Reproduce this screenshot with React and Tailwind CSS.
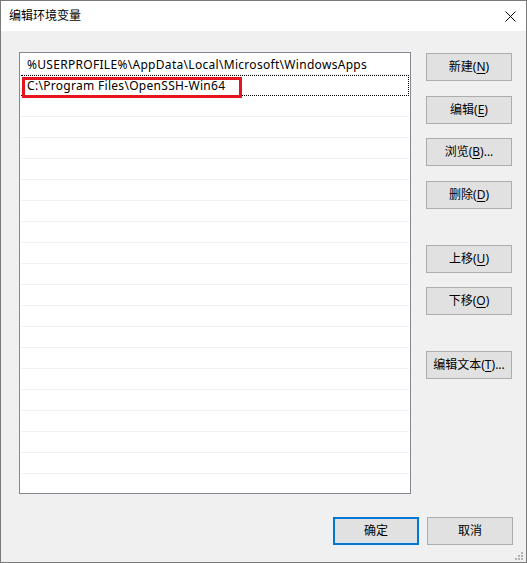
import React from 'react';

const rows = [
    '%USERPROFILE%\\AppData\\Local\\Microsoft\\WindowsApps',
    'C:\\Program Files\\OpenSSH-Win64',
];

const font = { fontFamily: '"Noto Sans", "Noto Sans CJK SC", sans-serif' };

const WinButton = ({ label, hotkey, suffix = '', className = '', primary = false }) => (
    <button
        className={`w-[86px] h-[28px] bg-[#e1e1e1] text-black text-[12px] leading-none flex items-center justify-center ${primary ? 'border-2 border-[#0078d7]' : 'border border-[#adadad]'} ${className}`}
    >
        <span>{label}</span>
        {hotkey && (
            <span>
                (<span className="underline underline-offset-2">{hotkey}</span>)
            </span>
        )}
        {suffix && <span>{suffix}</span>}
    </button>
);

export default function App() {
    const total = 21;

    return (
        <div
            className="w-[527px] h-[563px] flex flex-col border border-[#7a7a7a] bg-[#f0f0f0] overflow-hidden"
            style={font}
        >
            {/* Title bar */}
            <div className="h-[30px] bg-white flex items-center justify-between pl-[8px] pr-[10px] shrink-0">
                <span className="text-[12px] text-black">编辑环境变量</span>
                <svg width="11" height="11" viewBox="0 0 11 11" className="mt-[1px]">
                    <path d="M0.5 0.5 L10.5 10.5 M10.5 0.5 L0.5 10.5" stroke="#000" strokeWidth="1" />
                </svg>
            </div>

            {/* Body */}
            <div className="flex-1 relative flex flex-col pl-[18px] pr-[13px] pt-[21px]">
                <div className="flex">
                    {/* List */}
                    <div className="w-[392px] h-[442px] bg-white border border-[#828790] overflow-hidden pt-[1px] px-[1px]">
                        {Array.from({ length: total }).map((_, i) => (
                            <div
                                key={i}
                                className={`relative h-[21px] border-b border-[#f0f0f0] flex items-center pl-[6px] pt-[1px] text-[12px] tracking-[0.3px] text-black whitespace-nowrap ${i === 1 ? 'border-t border-r border-dotted border-t-black border-r-black border-b-black' : ''}`}
                            >
                                {rows[i] || ''}
                                {i === 1 && (
                                    <div className="absolute left-[1px] top-[1px] w-[220px] h-[21px] border-[3px] border-[#e6141e]"></div>
                                )}
                            </div>
                        ))}
                    </div>

                    {/* Side buttons */}
                    <div className="flex flex-col ml-[15px]">
                        <WinButton label="新建" hotkey="N" className="mt-[1px]" />
                        <WinButton label="编辑" hotkey="E" className="mt-[15px]" />
                        <WinButton label="浏览" hotkey="B" suffix="..." className="mt-[14px]" />
                        <WinButton label="删除" hotkey="D" className="mt-[15px]" />
                        <WinButton label="上移" hotkey="U" className="mt-[36px]" />
                        <WinButton label="下移" hotkey="O" className="mt-[14px]" />
                        <WinButton label="编辑文本" hotkey="T" suffix="..." className="mt-[36px]" />
                    </div>
                </div>

                {/* Bottom buttons */}
                <div className="flex justify-end gap-[8px] mt-[23px]">
                    <WinButton label="确定" primary />
                    <WinButton label="取消" />
                </div>

                {/* Resize grip */}
                <div className="absolute right-[3px] bottom-[2px] grid grid-cols-3 gap-[1px]">
                    <span className="w-[2px] h-[2px]"></span>
                    <span className="w-[2px] h-[2px]"></span>
                    <span className="w-[2px] h-[2px] bg-[#b4b4b4]"></span>
                    <span className="w-[2px] h-[2px]"></span>
                    <span className="w-[2px] h-[2px] bg-[#b4b4b4]"></span>
                    <span className="w-[2px] h-[2px] bg-[#b4b4b4]"></span>
                    <span className="w-[2px] h-[2px] bg-[#b4b4b4]"></span>
                    <span className="w-[2px] h-[2px] bg-[#b4b4b4]"></span>
                    <span className="w-[2px] h-[2px] bg-[#b4b4b4]"></span>
                </div>
            </div>
        </div>
    );
}
